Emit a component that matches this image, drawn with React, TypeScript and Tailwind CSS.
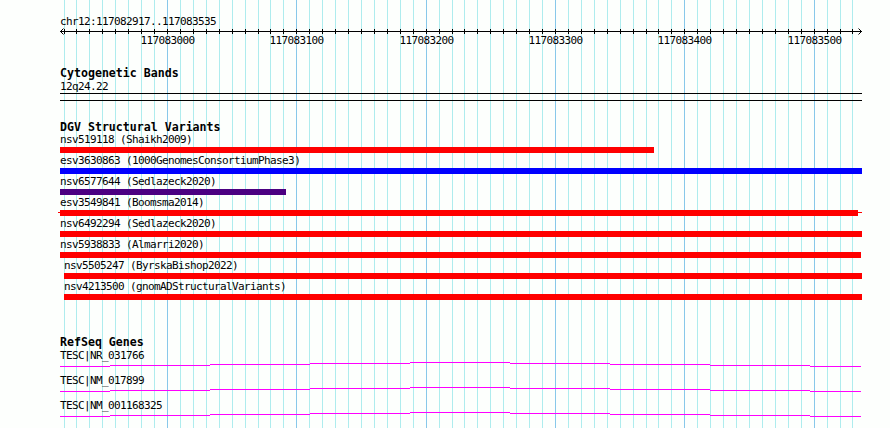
import React from "react";

// genomic coordinate -> pixel column
const BP0 = 117083000;
const toX = (p: number) => Math.round(167 + (p - BP0) * 1.2933);

const gridLines = Array.from({ length: 62 }, (_, i) => 117082920 + i * 10);
const majors = [117083000, 117083100, 117083200, 117083300, 117083400, 117083500];

const variants = [
  { id: "nsv519118", study: "Shaikh2009", color: "bg-[#ff0000]", from: 60, to: 654 },
  { id: "esv3630863", study: "1000GenomesConsortiumPhase3", color: "bg-[#0000ff]", from: 60, to: 862 },
  { id: "nsv6577644", study: "Sedlazeck2020", color: "bg-[#4b0082]", from: 60, to: 286 },
  { id: "esv3549841", study: "Boomsma2014", color: "bg-[#ff0000]", from: 60, to: 858, tail: true },
  { id: "nsv6492294", study: "Sedlazeck2020", color: "bg-[#ff0000]", from: 60, to: 862 },
  { id: "nsv5938833", study: "Almarri2020", color: "bg-[#ff0000]", from: 60, to: 861 },
  { id: "nsv5505247", study: "ByrskaBishop2022", color: "bg-[#ff0000]", from: 64, to: 862 },
  { id: "nsv4213500", study: "gnomADStructuralVariants", color: "bg-[#ff0000]", from: 64, to: 862 },
];

const genes = ["TESC|NR_031766", "TESC|NM_017899", "TESC|NM_001168325"];

// stepped intron line, [x0, x1, y]
const geneSteps: [number, number, number][] = [
  [60, 110, 5],
  [110, 210, 4],
  [210, 310, 3],
  [310, 410, 2],
  [410, 510, 1],
  [510, 610, 2],
  [610, 710, 3],
  [710, 810, 4],
  [810, 861, 5],
];

const Grid = () => (
  <svg className="absolute inset-0" width={890} height={428}>
    {gridLines.map((p) => (
      <rect
        key={p}
        x={toX(p)}
        y={0}
        width={1}
        height={428}
        fill={p % 100 === 0 ? "#88c8ea" : "#aeecee"}
      />
    ))}
  </svg>
);

const Ruler = () => (
  <svg width={890} height={20} className="block">
    <rect x={60} y={4} width={802} height={1} fill="#000" />
    <path d="M63.5 1.5 L60.5 4.5 L63.5 7.5" stroke="#000" fill="none" />
    <path d="M858.5 1.5 L861.5 4.5 L858.5 7.5" stroke="#000" fill="none" />
    {gridLines.map((p) => (
      <rect key={p} x={toX(p)} y={2} width={1} height={5} fill="#000" />
    ))}
    {majors.map((p) => (
      <text
        key={p}
        x={toX(p) + 0.5}
        y={17}
        textAnchor="middle"
        fontSize={11}
        letterSpacing={-0.62}
        fontFamily="'DejaVu Sans Mono', monospace"
        fill="#000"
      >
        {p}
      </text>
    ))}
  </svg>
);

export default function App() {
  return (
    <div className="relative w-[890px] h-[428px] overflow-hidden bg-[#fdfffd] text-black font-['DejaVu_Sans_Mono',monospace]">
      <Grid />
      <div className="relative flex flex-col">
        <div className="pl-[60px] pt-[15px] h-[28px] text-[11px] tracking-[-0.62px] leading-[13px]">
          chr12:117082917..117083535
        </div>
        <div className="-mt-px">
          <Ruler />
        </div>

        {/* Cytogenetic Bands */}
        <div className="pl-[60px] mt-[19px] h-[14px] text-[11.6px] leading-[14px] font-bold">Cytogenetic Bands</div>
        <div className="pl-[60px] h-[13px] text-[11px] tracking-[-0.62px] leading-[13px]">12q24.22</div>
        <div className="ml-[60px] w-[802px] h-[8px] border-y border-black" />

        {/* DGV Structural Variants */}
        <div className="pl-[60px] mt-[19px] h-[13px] text-[11.6px] leading-[14px] font-bold">DGV Structural Variants</div>
        <div className="flex flex-col">
          {variants.map((v) => (
            <div key={v.id} className="h-[21px] flex flex-col">
              <div
                className="h-[14px] text-[11px] tracking-[-0.62px] leading-[13px] whitespace-pre"
                style={{ paddingLeft: v.from }}
              >
                {v.id} ({v.study})
              </div>
              {v.tail ? (
                <div className="flex items-start h-[6px]" style={{ paddingLeft: v.from - 2 }}>
                  <div className="w-[2px] h-px mt-[2px] bg-[#ff0000]" />
                  <div className={`h-[6px] ${v.color}`} style={{ width: v.to - v.from }} />
                  <div className="w-[4px] h-px mt-[2px] bg-[#ff0000]" />
                </div>
              ) : (
                <div className="h-[6px]" style={{ paddingLeft: v.from }}>
                  <div className={`h-[6px] ${v.color}`} style={{ width: v.to - v.from }} />
                </div>
              )}
            </div>
          ))}
        </div>

        {/* RefSeq Genes */}
        <div className="pl-[60px] mt-[35px] h-[12px] text-[11.6px] leading-[12px] font-bold">RefSeq Genes</div>
        <div className="flex flex-col">
          {genes.map((g) => (
            <div key={g} className="h-[25px] flex flex-col">
              <div className="pl-[60px] pt-[2px] h-[13px] text-[11px] tracking-[-0.62px] leading-[11px]">{g}</div>
              <svg width={890} height={12} className="block">
                {geneSteps.map(([x0, x1, y]) => (
                  <rect key={x0} x={x0} y={y} width={x1 - x0} height={1} fill="#ff00ff" />
                ))}
              </svg>
            </div>
          ))}
        </div>
      </div>
    </div>
  );
}
